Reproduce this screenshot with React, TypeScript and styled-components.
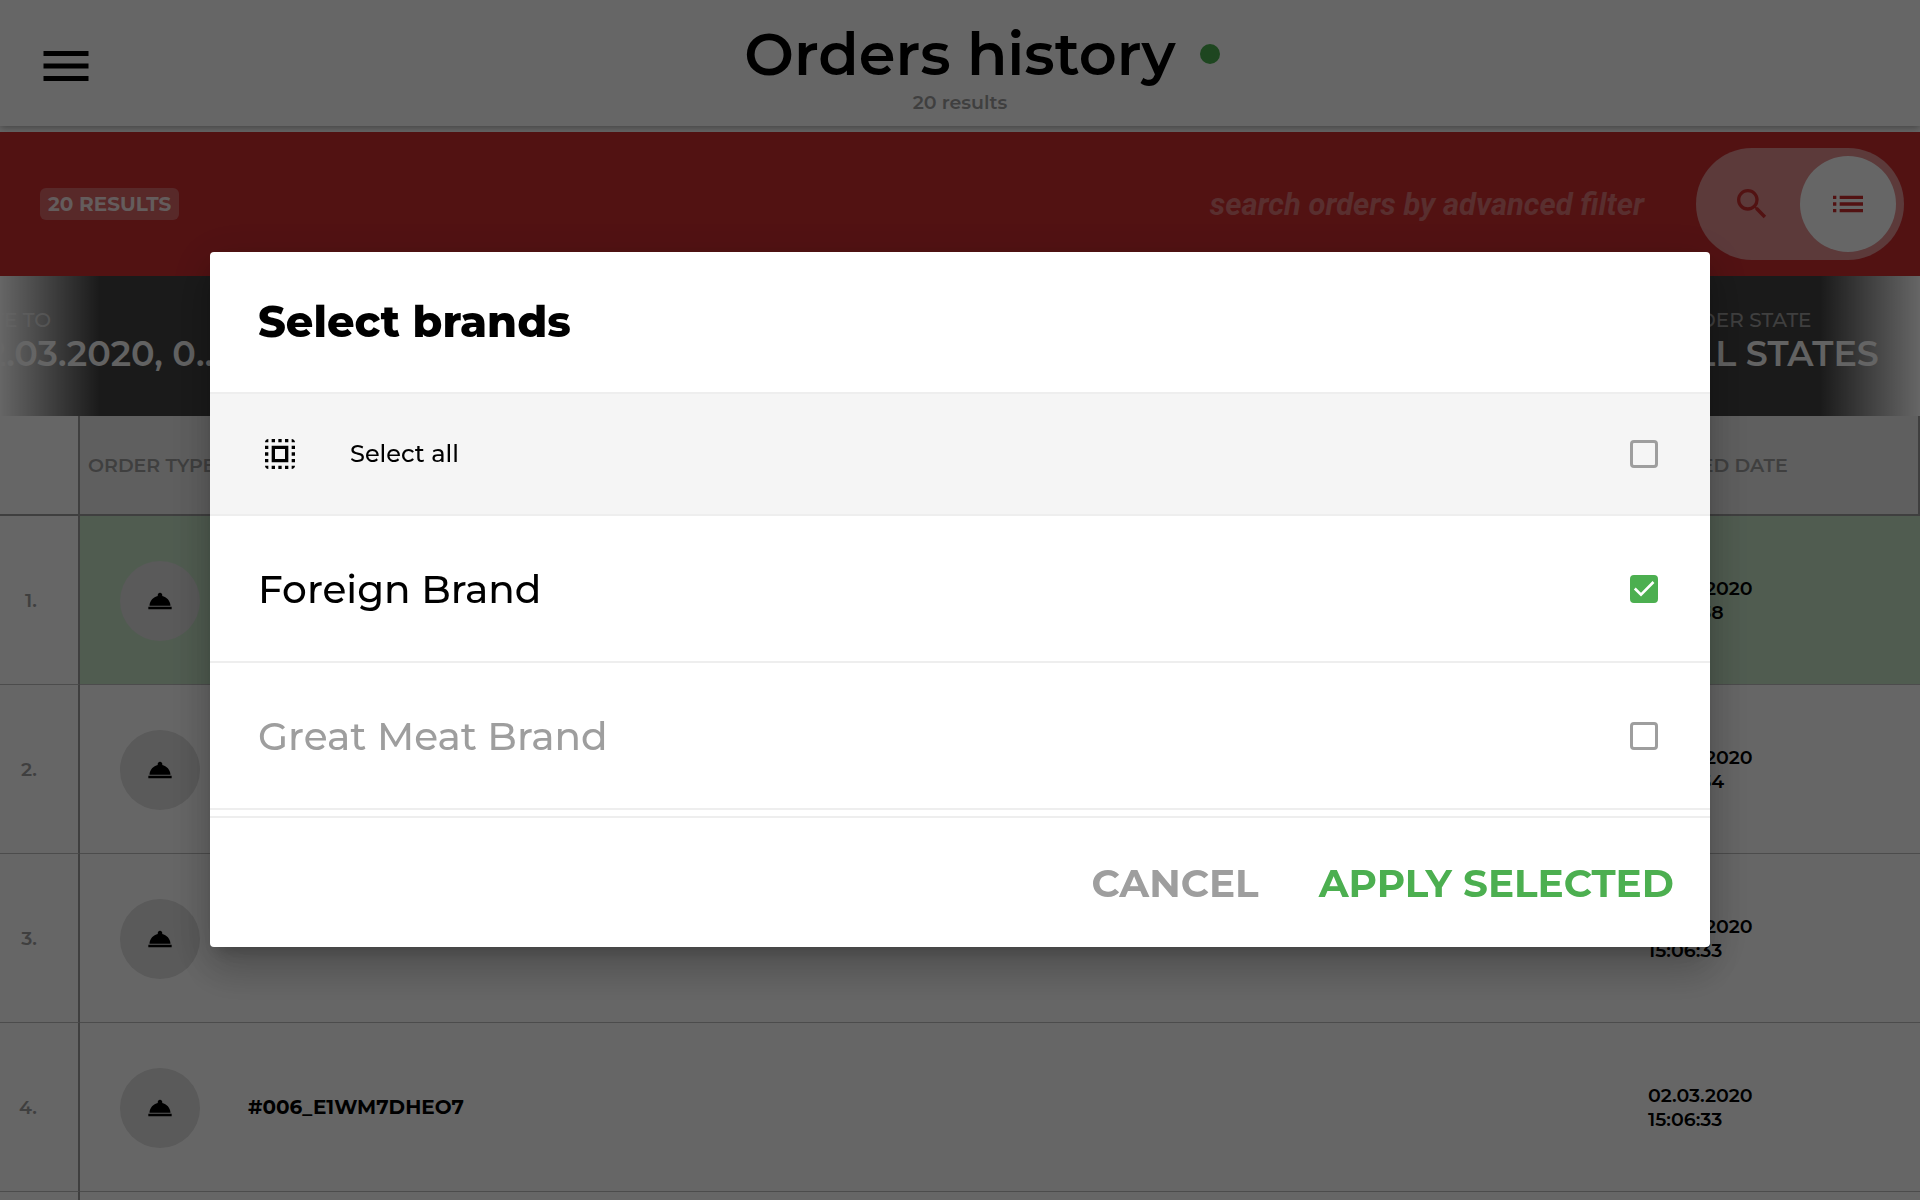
import React, { useState } from 'react';
import styled, { createGlobalStyle } from 'styled-components';
import { MdList, MdMenu, MdRoomService, MdSearch, MdSelectAll } from 'react-icons/md';

const GlobalStyle = createGlobalStyle`
  *, *::before, *::after { box-sizing: border-box; }
  html, body { margin: 0; height: 100%; }
  body {
    overflow: hidden;
    background: #fff;
    color: #000;
    font-family: Montserrat, Inter, "Liberation Sans", sans-serif;
    font-size: 20px;
    line-height: 24px;
  }
  h1, h2, p, ul { margin: 0; padding: 0; }
  button { border: 0; padding: 0; background: none; font: inherit; color: inherit; cursor: pointer; }
`;

const Page = styled.div`
  height: 100vh;
  overflow: hidden;
  display: flex;
  flex-direction: column;
`;

const AppBar = styled.header`
  flex: none;
  display: grid;
  grid-template-columns: 1fr auto 1fr;
  align-items: center;
  height: 126px;
  margin-bottom: 6px;
  padding: 6px 36px 0;
  background: #fff;
  box-shadow: 0 1px 8px rgba(0, 0, 0, 0.4);
`;

const MenuButton = styled.button`
  justify-self: start;
  display: flex;
`;

const TitleBlock = styled.div`
  text-align: center;
`;

const Title = styled.h1`
  display: flex;
  align-items: center;
  gap: 24px;
  padding-left: 44px;
  font-size: 59px;
  line-height: 72px;
  font-weight: 600;
`;

const StatusDot = styled.span`
  width: 20px;
  height: 20px;
  border-radius: 50%;
  background: #4caf50;
`;

const Subtitle = styled.p`
  padding-top: 1px;
  font-size: 19px;
  font-weight: 600;
  color: #9e9e9e;
`;

const SearchBar = styled.section`
  flex: none;
  display: flex;
  align-items: center;
  height: 144px;
  padding: 0 16px 0 40px;
  background: #cd2d2f;
`;

const ResultBadge = styled.span`
  padding: 4px 8px;
  border-radius: 6px;
  background: rgba(255, 255, 255, 0.28);
  color: rgba(255, 255, 255, 0.85);
  font-weight: 700;
`;

const SearchHint = styled.span`
  margin-left: auto;
  margin-right: 52px;
  padding-top: 2px;
  font: italic 700 31px/40px Roboto, sans-serif;
  color: rgba(255, 255, 255, 0.35);
`;

const Toggle = styled.div`
  display: flex;
  padding: 8px;
  border-radius: 56px;
  background: rgba(255, 255, 255, 0.48);
`;

const ToggleButton = styled.button<{ $active?: boolean }>`
  display: flex;
  align-items: center;
  justify-content: center;
  width: 96px;
  height: 96px;
  border-radius: 50%;
  background: ${(p) => (p.$active ? '#fff' : 'transparent')};
  color: #cd2d2f;
`;

const FilterStrip = styled.section`
  position: relative;
  flex: none;
  display: flex;
  justify-content: space-between;
  align-items: center;
  height: 140px;
  padding-bottom: 8px;
  overflow: hidden;
  background: #424242;

  &::before,
  &::after {
    content: '';
    position: absolute;
    top: 0;
    bottom: 0;
    width: 100px;
  }
  &::before { left: 0; background: linear-gradient(to right, #fff, rgba(255, 255, 255, 0)); }
  &::after { right: 0; background: linear-gradient(to left, #fff, rgba(255, 255, 255, 0)); }
`;

const Filter = styled.button`
  display: flex;
  flex-direction: column;
  flex: none;
  width: 252px;
  text-align: left;

  &:first-child {
    width: 272px;
    margin-left: -38px;
  }
`;

const FilterLabel = styled.span`
  font-weight: 500;
  color: #9e9e9e;
`;

const FilterValue = styled.span`
  overflow: hidden;
  text-overflow: ellipsis;
  white-space: nowrap;
  font-size: 35px;
  line-height: 44px;
  font-weight: 600;
  color: #f5f5f5;
`;

const OrdersTable = styled.table`
  width: 100%;
  flex: none;
  table-layout: fixed;
  border-collapse: separate;
  border-spacing: 0;
`;

const IndexCol = styled.col` width: 80px; `;
const TypeCol = styled.col` width: 160px; `;
const DateCol = styled.col` width: 280px; `;

const HeadCell = styled.th<{ $blank?: boolean }>`
  height: 100px;
  padding: 2px 8px 0;
  border-bottom: 2px solid #9e9e9e;
  border-right: ${(p) => (p.$blank ? '2px solid #9e9e9e' : '0')};
  background: ${(p) => (p.$blank ? '#fff' : '#eee')};
  color: #9e9e9e;
  font-size: 19px;
  font-weight: 600;
  text-align: left;
  white-space: nowrap;

  &:last-child { border-right: 2px solid #9e9e9e; }
`;

const Row = styled.tr<{ $highlight?: boolean }>`
  background: ${(p) => (p.$highlight ? '#c8e6c9' : '#fff')};
`;

const Cell = styled.td`
  height: 169px;
  padding: 1px 8px 0;
  border-bottom: 1px solid #bdbdbd;
  font-size: 19px;
  font-weight: 600;
`;

const IndexCell = styled(Cell)`
  padding: 1px 41px 0 0;
  border-right: 2px solid #9e9e9e;
  background: #fff;
  color: #9e9e9e;
  text-align: right;
`;

const TypeBadge = styled.span`
  display: flex;
  align-items: center;
  justify-content: center;
  width: 80px;
  height: 80px;
  margin-left: 32px;
  border-radius: 50%;
  background: #e0e0e0;
`;

const OrderId = styled.span`
  font-size: 20px;
  font-weight: 700;
`;

const DateLine = styled.span`
  display: block;
`;

const Backdrop = styled.div`
  position: fixed;
  inset: 0;
  display: flex;
  align-items: center;
  justify-content: center;
  padding: 0 210px 1px;
  background: rgba(0, 0, 0, 0.6);
`;

const Dialog = styled.form`
  flex: 1;
  max-width: 1500px;
  overflow: hidden;
  border-radius: 4px;
  background: #fff;
  box-shadow:
    0 11px 15px -7px rgba(0, 0, 0, 0.2),
    0 24px 38px 3px rgba(0, 0, 0, 0.14),
    0 9px 46px 8px rgba(0, 0, 0, 0.12);
`;

const DialogTitle = styled.h2`
  padding: 42px 48px;
  border-bottom: 2px solid #eee;
  font-size: 43px;
  line-height: 56px;
  font-weight: 800;
`;

const Options = styled.div`
  padding-bottom: 6px;
`;

const Option = styled.label<{ $all?: boolean; $on?: boolean }>`
  display: flex;
  align-items: center;
  height: ${(p) => (p.$all ? 122 : 147)}px;
  padding: 0 52px 0 ${(p) => (p.$all ? 50 : 48)}px;
  border-bottom: 2px solid #eee;
  background: ${(p) => (p.$all ? '#f5f5f5' : '#fff')};
  color: ${(p) => (p.$all || p.$on ? '#000' : '#9e9e9e')};
  font-size: ${(p) => (p.$all ? 24 : 39)}px;
  line-height: 48px;
  font-weight: 500;
  cursor: pointer;

  svg + span { margin-left: 50px; }
`;

const CheckWrap = styled.span`
  display: grid;
  margin-left: auto;

  > * { grid-area: 1 / 1; }
  svg { pointer-events: none; }
`;

const Check = styled.input`
  appearance: none;
  width: 28px;
  height: 28px;
  margin: 0;
  border: 3px solid #9e9e9e;
  border-radius: 4px;

  &:checked { border-color: #4caf50; background: #4caf50; }
`;

const Actions = styled.footer`
  display: flex;
  justify-content: flex-end;
  gap: 60px;
  padding: 41px 36px 40px;
  border-top: 2px solid #eee;
`;

const ActionButton = styled.button<{ $primary?: boolean }>`
  font-size: 39px;
  line-height: 48px;
  font-weight: 700;
  color: ${(p) => (p.$primary ? '#4caf50' : '#9e9e9e')};
`;

const orders = [
  { id: '#009_E1WM7DHEO7', date: '02.03.2020', time: '15:06:38' },
  { id: '#008_E1WM7DHEO7', date: '02.03.2020', time: '15:06:34' },
  { id: '#007_E1WM7DHEO7', date: '02.03.2020', time: '15:06:33' },
  { id: '#006_E1WM7DHEO7', date: '02.03.2020', time: '15:06:33' },
  { id: '#005_E1WM7DHEO7', date: '02.03.2020', time: '15:06:33' },
];

const brands = ['Foreign Brand', 'Great Meat Brand'];

type CheckboxProps = { checked: boolean; onChange: () => void };

function Checkbox({ checked, onChange }: CheckboxProps) {
  return (
    <CheckWrap>
      <Check type="checkbox" checked={checked} onChange={onChange} />
      {checked && (
        <svg width="28" height="28" viewBox="0 0 28 28" fill="none" stroke="#fff" strokeWidth="2.6">
          <path d="M4.8 13.5l6.2 6.2L23.5 7" />
        </svg>
      )}
    </CheckWrap>
  );
}

export default function App() {
  const [selected, setSelected] = useState<string[]>(['Foreign Brand']);
  const all = selected.length === brands.length;
  const toggle = (brand: string) =>
    setSelected((s) => (s.includes(brand) ? s.filter((b) => b !== brand) : [...s, brand]));

  return (
    <>
      <GlobalStyle />
      <Page>
        <AppBar>
          <MenuButton type="button" aria-label="Menu"><MdMenu size={60} /></MenuButton>
          <TitleBlock>
            <Title>Orders history<StatusDot /></Title>
            <Subtitle>20 results</Subtitle>
          </TitleBlock>
        </AppBar>
        <SearchBar>
          <ResultBadge>20 RESULTS</ResultBadge>
          <SearchHint>search orders by advanced filter</SearchHint>
          <Toggle>
            <ToggleButton type="button" aria-label="Search"><MdSearch size={40} /></ToggleButton>
            <ToggleButton type="button" aria-label="List" $active><MdList size={40} /></ToggleButton>
          </Toggle>
        </SearchBar>
        <FilterStrip>
          <Filter type="button">
            <FilterLabel>DATE TO</FilterLabel>
            <FilterValue>02.03.2020, 00:00</FilterValue>
          </Filter>
          <Filter type="button">
            <FilterLabel>ORDER STATE</FilterLabel>
            <FilterValue>ALL STATES</FilterValue>
          </Filter>
        </FilterStrip>
        <OrdersTable>
          <colgroup><IndexCol /><TypeCol /><col /><DateCol /></colgroup>
          <thead>
            <tr>
              <HeadCell $blank />
              <HeadCell>ORDER TYPE</HeadCell>
              <HeadCell />
              <HeadCell>CLOSED DATE</HeadCell>
            </tr>
          </thead>
          <tbody>
            {orders.map((order, i) => (
              <Row key={order.id} $highlight={i === 0}>
                <IndexCell>{i + 1}.</IndexCell>
                <Cell><TypeBadge><MdRoomService size={28} /></TypeBadge></Cell>
                <Cell><OrderId>{order.id}</OrderId></Cell>
                <Cell>
                  <DateLine>{order.date}</DateLine>
                  <DateLine>{order.time}</DateLine>
                </Cell>
              </Row>
            ))}
          </tbody>
        </OrdersTable>
      </Page>
      <Backdrop>
        <Dialog role="dialog" aria-labelledby="brands-title" onSubmit={(e) => e.preventDefault()}>
          <DialogTitle id="brands-title">Select brands</DialogTitle>
          <Options>
            <Option $all>
              <MdSelectAll size={40} />
              <span>Select all</span>
              <Checkbox checked={all} onChange={() => setSelected(all ? [] : brands)} />
            </Option>
            {brands.map((brand) => (
              <Option key={brand} $on={selected.includes(brand)}>
                <span>{brand}</span>
                <Checkbox checked={selected.includes(brand)} onChange={() => toggle(brand)} />
              </Option>
            ))}
          </Options>
          <Actions>
            <ActionButton type="button">CANCEL</ActionButton>
            <ActionButton type="submit" $primary>APPLY SELECTED</ActionButton>
          </Actions>
        </Dialog>
      </Backdrop>
    </>
  );
}
